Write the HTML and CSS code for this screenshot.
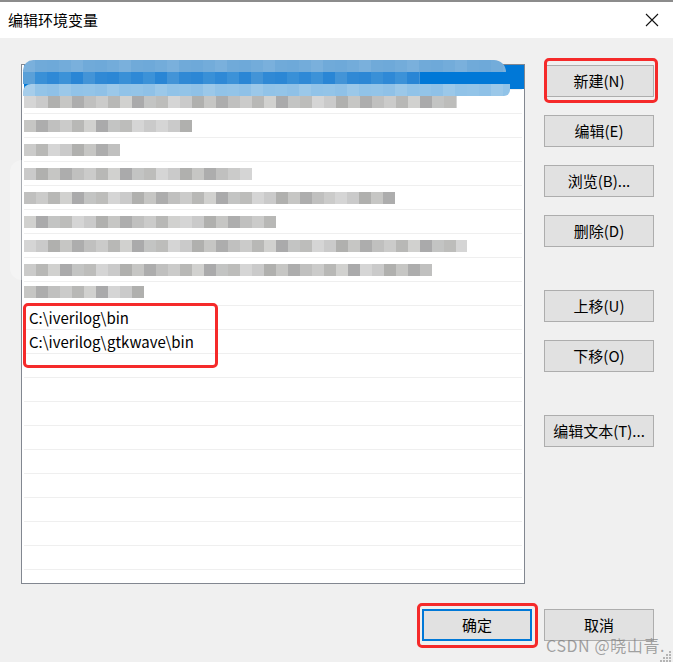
FILE: index.html
```html
<!DOCTYPE html>
<html lang="zh-CN">
<head>
<meta charset="utf-8">
<title>编辑环境变量</title>
<link rel="stylesheet" href="styles.css">
</head>
<body>
<div class="window">
  <div class="titlebar">
    <span class="title">编辑环境变量</span>
    <svg class="close" width="14" height="14" viewBox="0 0 14 14"><path d="M1 1 L13 13 M13 1 L1 13" stroke="#111" stroke-width="1.1" fill="none"/></svg>
  </div>
  <div class="content">
    <div class="main">
      <div class="list">
        <div class="row sel"></div>
        <div class="row"><span class="mosaic m1" style="width:433px"></span></div>
        <div class="row"><span class="mosaic m2" style="width:168px"></span></div>
        <div class="row"><span class="mosaic m3" style="width:96px"></span></div>
        <div class="row"><span class="mosaic m4" style="width:228px"></span></div>
        <div class="row"><span class="mosaic m5" style="width:371px"></span></div>
        <div class="row"><span class="mosaic m6" style="width:252px"></span></div>
        <div class="row"><span class="mosaic m1" style="width:443px"></span></div>
        <div class="row"><span class="mosaic m3" style="width:408px"></span></div>
        <div class="row"><span class="mosaic m2 short" style="width:120px"></span></div>
        <div class="row"><span class="text">C:\iverilog\bin</span></div>
        <div class="row"><span class="text">C:\iverilog\gtkwave\bin</span></div>
        <div class="row"></div>
        <div class="row"></div>
        <div class="row"></div>
        <div class="row"></div>
        <div class="row"></div>
        <div class="row"></div>
        <div class="row"></div>
        <div class="row"></div>
        <div class="row"></div>
        <div class="row"></div>
      </div>
      <div class="side">
        <button class="btn">新建(N)</button>
        <button class="btn">编辑(E)</button>
        <button class="btn">浏览(B)...</button>
        <button class="btn">删除(D)</button>
        <button class="btn spaced">上移(U)</button>
        <button class="btn">下移(O)</button>
        <button class="btn spaced">编辑文本(T)...</button>
      </div>
    </div>
    <div class="footer">
      <button class="btn default">确定</button>
      <button class="btn">取消</button>
    </div>
  </div>
  <div class="blur-sel">
    <span class="blur-top"></span>
    <span class="blur-mid"></span>
    <span class="blur-bot"></span>
  </div>
  <div class="haze"></div>
  <div class="mark mark-new"></div>
  <div class="mark mark-paths"></div>
  <div class="mark mark-ok"></div>
  <div class="watermark">CSDN @晓山青.</div>
  <svg class="grip" width="12" height="12" viewBox="0 0 12 12">
    <rect x="9" y="1" width="2" height="2" fill="#b5b5b5"/>
    <rect x="6" y="4" width="2" height="2" fill="#b5b5b5"/>
    <rect x="9" y="4" width="2" height="2" fill="#b5b5b5"/>
    <rect x="3" y="7" width="2" height="2" fill="#b5b5b5"/>
    <rect x="6" y="7" width="2" height="2" fill="#b5b5b5"/>
    <rect x="9" y="7" width="2" height="2" fill="#b5b5b5"/>
    <rect x="0" y="10" width="2" height="2" fill="#b5b5b5"/>
    <rect x="3" y="10" width="2" height="2" fill="#b5b5b5"/>
    <rect x="6" y="10" width="2" height="2" fill="#b5b5b5"/>
    <rect x="9" y="10" width="2" height="2" fill="#b5b5b5"/>
  </svg>
</div>
</body>
</html>
```

FILE: styles.css
```css
* { box-sizing: border-box; }

html, body {
  margin: 0;
  padding: 0;
  background: #f0f0f0;
}

body {
  font-family: "Noto Sans CJK SC", "Noto Sans", sans-serif;
  font-size: 15px;
  color: #000;
}

.window {
  position: relative;
  width: 673px;
  height: 662px;
  overflow: hidden;
  background: #f0f0f0;
}

.titlebar {
  height: 38px;
  background: #fff;
  border-top: 2px solid #8c8c8c;
  display: flex;
  align-items: center;
  justify-content: space-between;
  padding: 0 14px 0 8px;
}

.title {
  font-size: 15px;
  line-height: 20px;
  color: #000;
}

.close {
  display: block;
}

.content {
  padding: 26px 19px 0 21px;
}

.main {
  display: flex;
  gap: 19px;
}

.list {
  width: 504px;
  height: 520px;
  border: 1px solid #828790;
  background: #fff;
  overflow: hidden;
}

.row {
  position: relative;
  height: 24px;
  margin: 0 2px;
  border-top: 1px solid #efefef;
  display: flex;
  align-items: center;
}

.row.sel {
  border-top: none;
  margin: 0 0 0 2px;
  background: #0078d7;
}

.text {
  padding-left: 5px;
  font-size: 15px;
  line-height: 20px;
  white-space: nowrap;
}

.mosaic {
  display: block;
  height: 12px;
  margin-top: 1px;
  background-image: repeating-linear-gradient(90deg,
    #d5d5d5 0 12px, #cacaca 12px 24px, #b0b0ae 24px 36px, #c6c6c4 36px 48px,
    #adadad 48px 60px, #c0c0bf 60px 72px, #cbcbca 72px 84px, #b8b8b6 84px 96px,
    #d1d1cf 96px 108px, #aaaaab 108px 120px, #c3c4c3 120px 132px, #bdbdbb 132px 144px);
}

.mosaic.m2 { background-position: -36px 0; }
.mosaic.m3 { background-position: -72px 0; }
.mosaic.m4 { background-position: -12px 0; }
.mosaic.m5 { background-position: -60px 0; }
.mosaic.m6 { background-position: -96px 0; }
.mosaic.short { margin-top: -3px; }

/* pixelated blur over the selected entry; it spills past the list border */
.blur-sel {
  position: absolute;
  left: 23px;
  top: 60px;
  width: 490px;
  height: 36px;
}

.blur-top, .blur-mid, .blur-bot {
  position: absolute;
  left: 0;
  height: 12px;
}

.blur-top {
  top: 0;
  width: 483px;
  border-radius: 12px 14px 0 0;
  background-image: repeating-linear-gradient(90deg,
    #7ab0dc 0 12px, #70aad9 12px 24px, #6ea9d9 24px 36px, #73acda 36px 48px);
}

.blur-mid {
  top: 12px;
  width: 397px;
  background-image: linear-gradient(90deg, #5aa0d8 0 12px, transparent 12px),
    repeating-linear-gradient(90deg,
    #2c87d5 0 12px, #3990d7 12px 24px, #2f89d6 24px 36px, #3c92d8 36px 48px,
    #2a86d5 48px 60px, #4394d7 60px 72px, #3089d5 72px 84px);
}

.blur-bot {
  top: 24px;
  width: 487px;
  border-radius: 8px 0 6px 0;
  background-image: linear-gradient(90deg, #a6cdea 0 12px, transparent 12px),
    repeating-linear-gradient(90deg,
    #91c3e8 0 12px, #93c4e8 12px 24px, #8fc1e7 24px 36px, #9bc8e9 36px 48px);
}

.side {
  display: flex;
  flex-direction: column;
  gap: 18px;
  padding-top: 1px;
}

.btn {
  width: 110px;
  height: 32px;
  padding: 0;
  margin: 0;
  background: #e1e1e1;
  border: 1px solid #adadad;
  border-radius: 0;
  font-family: "Noto Sans CJK SC", "Noto Sans", sans-serif;
  font-size: 15px;
  line-height: 20px;
  color: #000;
  text-align: center;
}

.btn.spaced {
  margin-top: 25px;
}

.btn.default {
  border: 2px solid #0078d7;
}

.footer {
  display: flex;
  justify-content: flex-end;
  gap: 12px;
  margin-top: 25px;
}

.haze {
  position: absolute;
  left: 10px;
  top: 160px;
  width: 14px;
  height: 120px;
  border-radius: 12px 0 0 12px;
  background: rgba(255, 255, 255, 0.3);
}

.mark {
  position: absolute;
  border: 3px solid #f52a2a;
  border-radius: 5px;
  z-index: 5;
}

.mark-new {
  left: 544px;
  top: 58px;
  width: 114px;
  height: 45px;
}

.mark-paths {
  left: 23px;
  top: 303px;
  width: 195px;
  height: 65px;
}

.mark-ok {
  left: 417px;
  top: 603px;
  width: 121px;
  height: 45px;
}

.watermark {
  position: absolute;
  left: 546px;
  top: 634px;
  font-size: 16px;
  line-height: 22px;
  letter-spacing: 0.6px;
  color: rgba(125, 125, 125, 0.7);
  white-space: nowrap;
  z-index: 6;
}

.grip {
  position: absolute;
  right: 1px;
  bottom: 0;
}
```
